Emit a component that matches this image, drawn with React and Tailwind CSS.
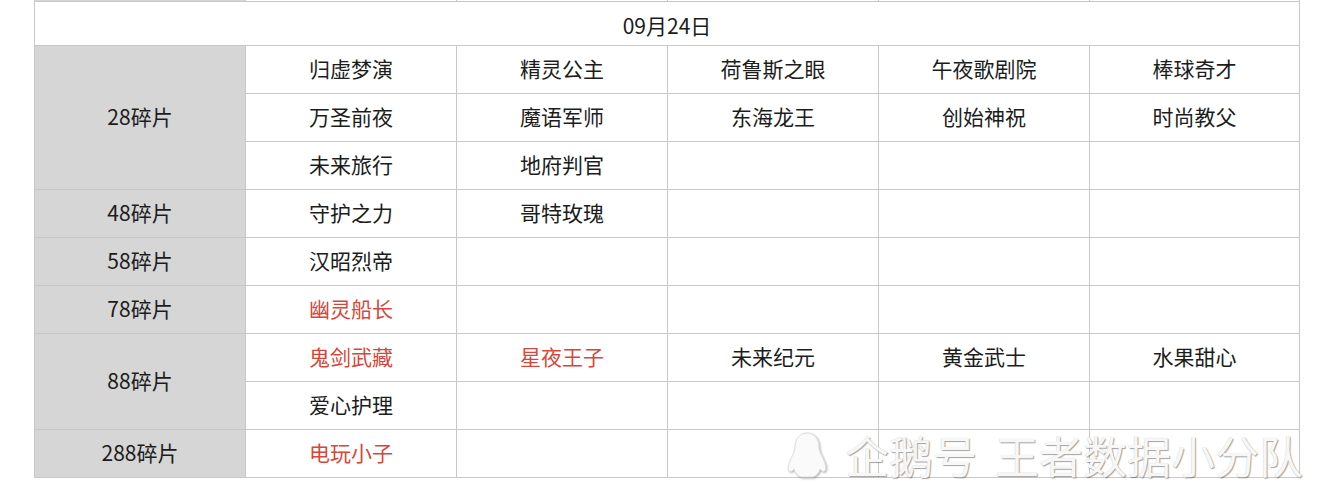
import React from 'react'

const RED = new Set(['幽灵船长', '鬼剑武藏', '星夜王子', '电玩小子'])

const GROUPS = [
  {
    label: '28碎片',
    rows: [
      ['归虚梦演', '精灵公主', '荷鲁斯之眼', '午夜歌剧院', '棒球奇才'],
      ['万圣前夜', '魔语军师', '东海龙王', '创始神祝', '时尚教父'],
      ['未来旅行', '地府判官', '', '', ''],
    ],
  },
  { label: '48碎片', rows: [['守护之力', '哥特玫瑰', '', '', '']] },
  { label: '58碎片', rows: [['汉昭烈帝', '', '', '', '']] },
  { label: '78碎片', rows: [['幽灵船长', '', '', '', '']] },
  {
    label: '88碎片',
    rows: [
      ['鬼剑武藏', '星夜王子', '未来纪元', '黄金武士', '水果甜心'],
      ['爱心护理', '', '', '', ''],
    ],
  },
  { label: '288碎片', rows: [['电玩小子', '', '', '', '']] },
]

const cell = 'border border-[#c8c8c8] p-0 text-center align-middle'

function Penguin() {
  return (
    <svg width="46" height="48" viewBox="0 0 46 48" className="[filter:drop-shadow(1px_1px_1px_rgba(0,0,0,0.3))]">
      <path
        d="M23 2 C15 2 11 9 11 16 C11 20 9 23 6 30 C3 37 4 42 8 40 L10 38 C11 42 14 45 17 46 L29 46 C32 45 35 42 36 38 L38 40 C42 42 43 37 40 30 C37 23 35 20 35 16 C35 9 31 2 23 2 Z"
        fill="#fafafa"
        stroke="#dedede"
        strokeWidth="1"
      />
    </svg>
  )
}

export default function App() {
  return (
    <div className="relative w-[1334px] h-[501px] bg-white overflow-hidden font-['Noto_Sans_CJK_SC',sans-serif] text-[#1c1c1c]">
      <table className="ml-[34px] w-[1265px] table-fixed border-collapse">
        <colgroup>
          <col className="w-[211px]" />
          <col className="w-[211px]" />
          <col className="w-[211px]" />
          <col className="w-[211px]" />
          <col className="w-[211px]" />
          <col className="w-[210px]" />
        </colgroup>
        <tbody>
          <tr className="h-[1px]">
            <td className="border-x border-b border-[#c8c8c8] bg-[#d6d6d6] p-0 h-[1px] leading-[0]" />
            {[0, 1, 2, 3, 4].map(i => (
              <td key={i} className="border-x border-b border-[#c8c8c8] p-0 h-[1px] leading-[0]" />
            ))}
          </tr>
          <tr className="h-[44px]">
            <td colSpan={6} className={`${cell} text-[21px] pt-[6px]`}>09月24日</td>
          </tr>
          {GROUPS.map(g =>
            g.rows.map((r, ri) => (
              <tr key={g.label + ri} className="h-[48px]">
                {ri === 0 && (
                  <td rowSpan={g.rows.length} className={`${cell} bg-[#d6d6d6] text-[21px]`}>
                    {g.label}
                  </td>
                )}
                {r.map((t, ci) => (
                  <td key={ci} className={`${cell} text-[21px] ${RED.has(t) ? 'text-[#d4473a]' : ''}`}>
                    {t}
                  </td>
                ))}
              </tr>
            ))
          )}
        </tbody>
      </table>

      <div className="absolute left-[784px] top-[431px] flex items-center pointer-events-none text-[44px] leading-[44px] text-[#f7f7f7] [text-shadow:1px_1px_1px_rgba(0,0,0,0.35),0_0_1px_rgba(0,0,0,0.2)]">
        <Penguin />
        <span className="ml-[15px]">企鹅号</span>
        <span className="ml-[18px]">王者数据小分队</span>
      </div>
    </div>
  )
}
